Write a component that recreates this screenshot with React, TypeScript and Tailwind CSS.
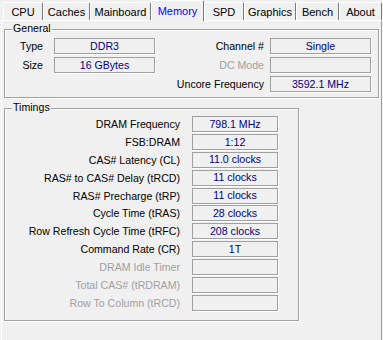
import React from 'react';

const tabs = [
  { name: 'CPU', w: 'w-[40px]' },
  { name: 'Caches', w: 'w-[47px]' },
  { name: 'Mainboard', w: 'w-[61px]' },
  { name: 'Memory', w: 'w-[53px]', active: true },
  { name: 'SPD', w: 'w-[40px]' },
  { name: 'Graphics', w: 'w-[52px]' },
  { name: 'Bench', w: 'w-[43px]' },
  { name: 'About', w: 'w-[43px]' },
];

const timings: { label: string; value: string; disabled?: boolean }[] = [
  { label: 'DRAM Frequency', value: '798.1 MHz' },
  { label: 'FSB:DRAM', value: '1:12' },
  { label: 'CAS# Latency (CL)', value: '11.0 clocks' },
  { label: 'RAS# to CAS# Delay (tRCD)', value: '11 clocks' },
  { label: 'RAS# Precharge (tRP)', value: '11 clocks' },
  { label: 'Cycle Time (tRAS)', value: '28 clocks' },
  { label: 'Row Refresh Cycle Time (tRFC)', value: '208 clocks' },
  { label: 'Command Rate (CR)', value: '1T' },
  { label: 'DRAM Idle Timer', value: '', disabled: true },
  { label: 'Total CAS# (tRDRAM)', value: '', disabled: true },
  { label: 'Row To Column (tRCD)', value: '', disabled: true },
];

function Field({ value, w }: { value: string; w: string }) {
  return (
    <div
      className={`${w} h-[16px] border border-[#a0a0a0] shadow-[1px_1px_0_#ffffff] flex items-center justify-center text-[#000080] leading-none`}
    >
      {value}
    </div>
  );
}

function Group({ title, className, children }: { title: string; className: string; children: React.ReactNode }) {
  return (
    <div
      className={`relative border border-[#a0a0a0] shadow-[inset_1px_1px_0_#ffffff,1px_1px_0_#ffffff] ${className}`}
    >
      <span className="absolute left-[7px] top-[-7px] bg-[#f0f0f0] px-[1px] leading-none text-black">{title}</span>
      {children}
    </div>
  );
}

export default function App() {
  return (
    <div
      className="w-[383px] h-[340px] bg-[#f0f0f0] overflow-hidden text-[10.6px] leading-[16px] text-black select-none"
      style={{ fontFamily: '"Liberation Sans", Arial, sans-serif' }}
    >
      {/* Onglets */}
      <div className="flex items-end h-[20px] pl-[3px] text-[11px]">
        {tabs.map(t => (
          <div
            key={t.name}
            className={`${t.w} flex items-center justify-center border-t border-l border-r border-t-white border-l-white border-r-[#7a7a7a] rounded-t-[2px] bg-[#f0f0f0] ${
              t.active ? 'h-[21px] -mb-px relative z-10 text-[#0000ff]' : 'h-[18px]'
            }`}
          >
            {t.name}
          </div>
        ))}
      </div>

      {/* Panneau */}
      <div className="ml-[1px] w-[381px] h-[330px] border-t border-l border-r border-t-white border-l-white border-r-[#a0a0a0] pl-[2px] pt-[8px]">
        <Group title="General" className="w-[375px] h-[69px]">
          <div className="flex justify-between pt-[8px] pr-[7px]">
            <div className="flex flex-col gap-[3px]">
              <div className="flex items-center h-[16px]">
                <span className="w-[38px] text-right">Type</span>
                <span className="w-[11px]" />
                <Field value="DDR3" w="w-[101px]" />
              </div>
              <div className="flex items-center h-[16px]">
                <span className="w-[38px] text-right">Size</span>
                <span className="w-[11px]" />
                <Field value="16 GBytes" w="w-[101px]" />
              </div>
            </div>
            <div className="flex flex-col gap-[3px]">
              <div className="flex items-center h-[16px]">
                <span className="w-[92px] text-right">Channel #</span>
                <span className="w-[6px]" />
                <Field value="Single" w="w-[101px]" />
              </div>
              <div className="flex items-center h-[16px]">
                <span className="w-[92px] text-right text-[#a0a0a0]">DC Mode</span>
                <span className="w-[6px]" />
                <Field value="" w="w-[101px]" />
              </div>
              <div className="flex items-center h-[16px]">
                <span className="w-[92px] text-right">Uncore Frequency</span>
                <span className="w-[6px]" />
                <Field value="3592.1 MHz" w="w-[101px]" />
              </div>
            </div>
          </div>
        </Group>

        <Group title="Timings" className="mt-[10px] w-[295px] h-[213px]">
          <div className="flex flex-col gap-[1.9px] pt-[7px]">
            {timings.map(r => (
              <div key={r.label} className="flex items-center h-[16px]">
                <span className={`w-[175px] text-right whitespace-nowrap ${r.disabled ? 'text-[#a0a0a0]' : ''}`}>
                  {r.label}
                </span>
                <span className="w-[12px]" />
                <Field value={r.value} w="w-[86px]" />
              </div>
            ))}
          </div>
        </Group>
      </div>
    </div>
  );
}
